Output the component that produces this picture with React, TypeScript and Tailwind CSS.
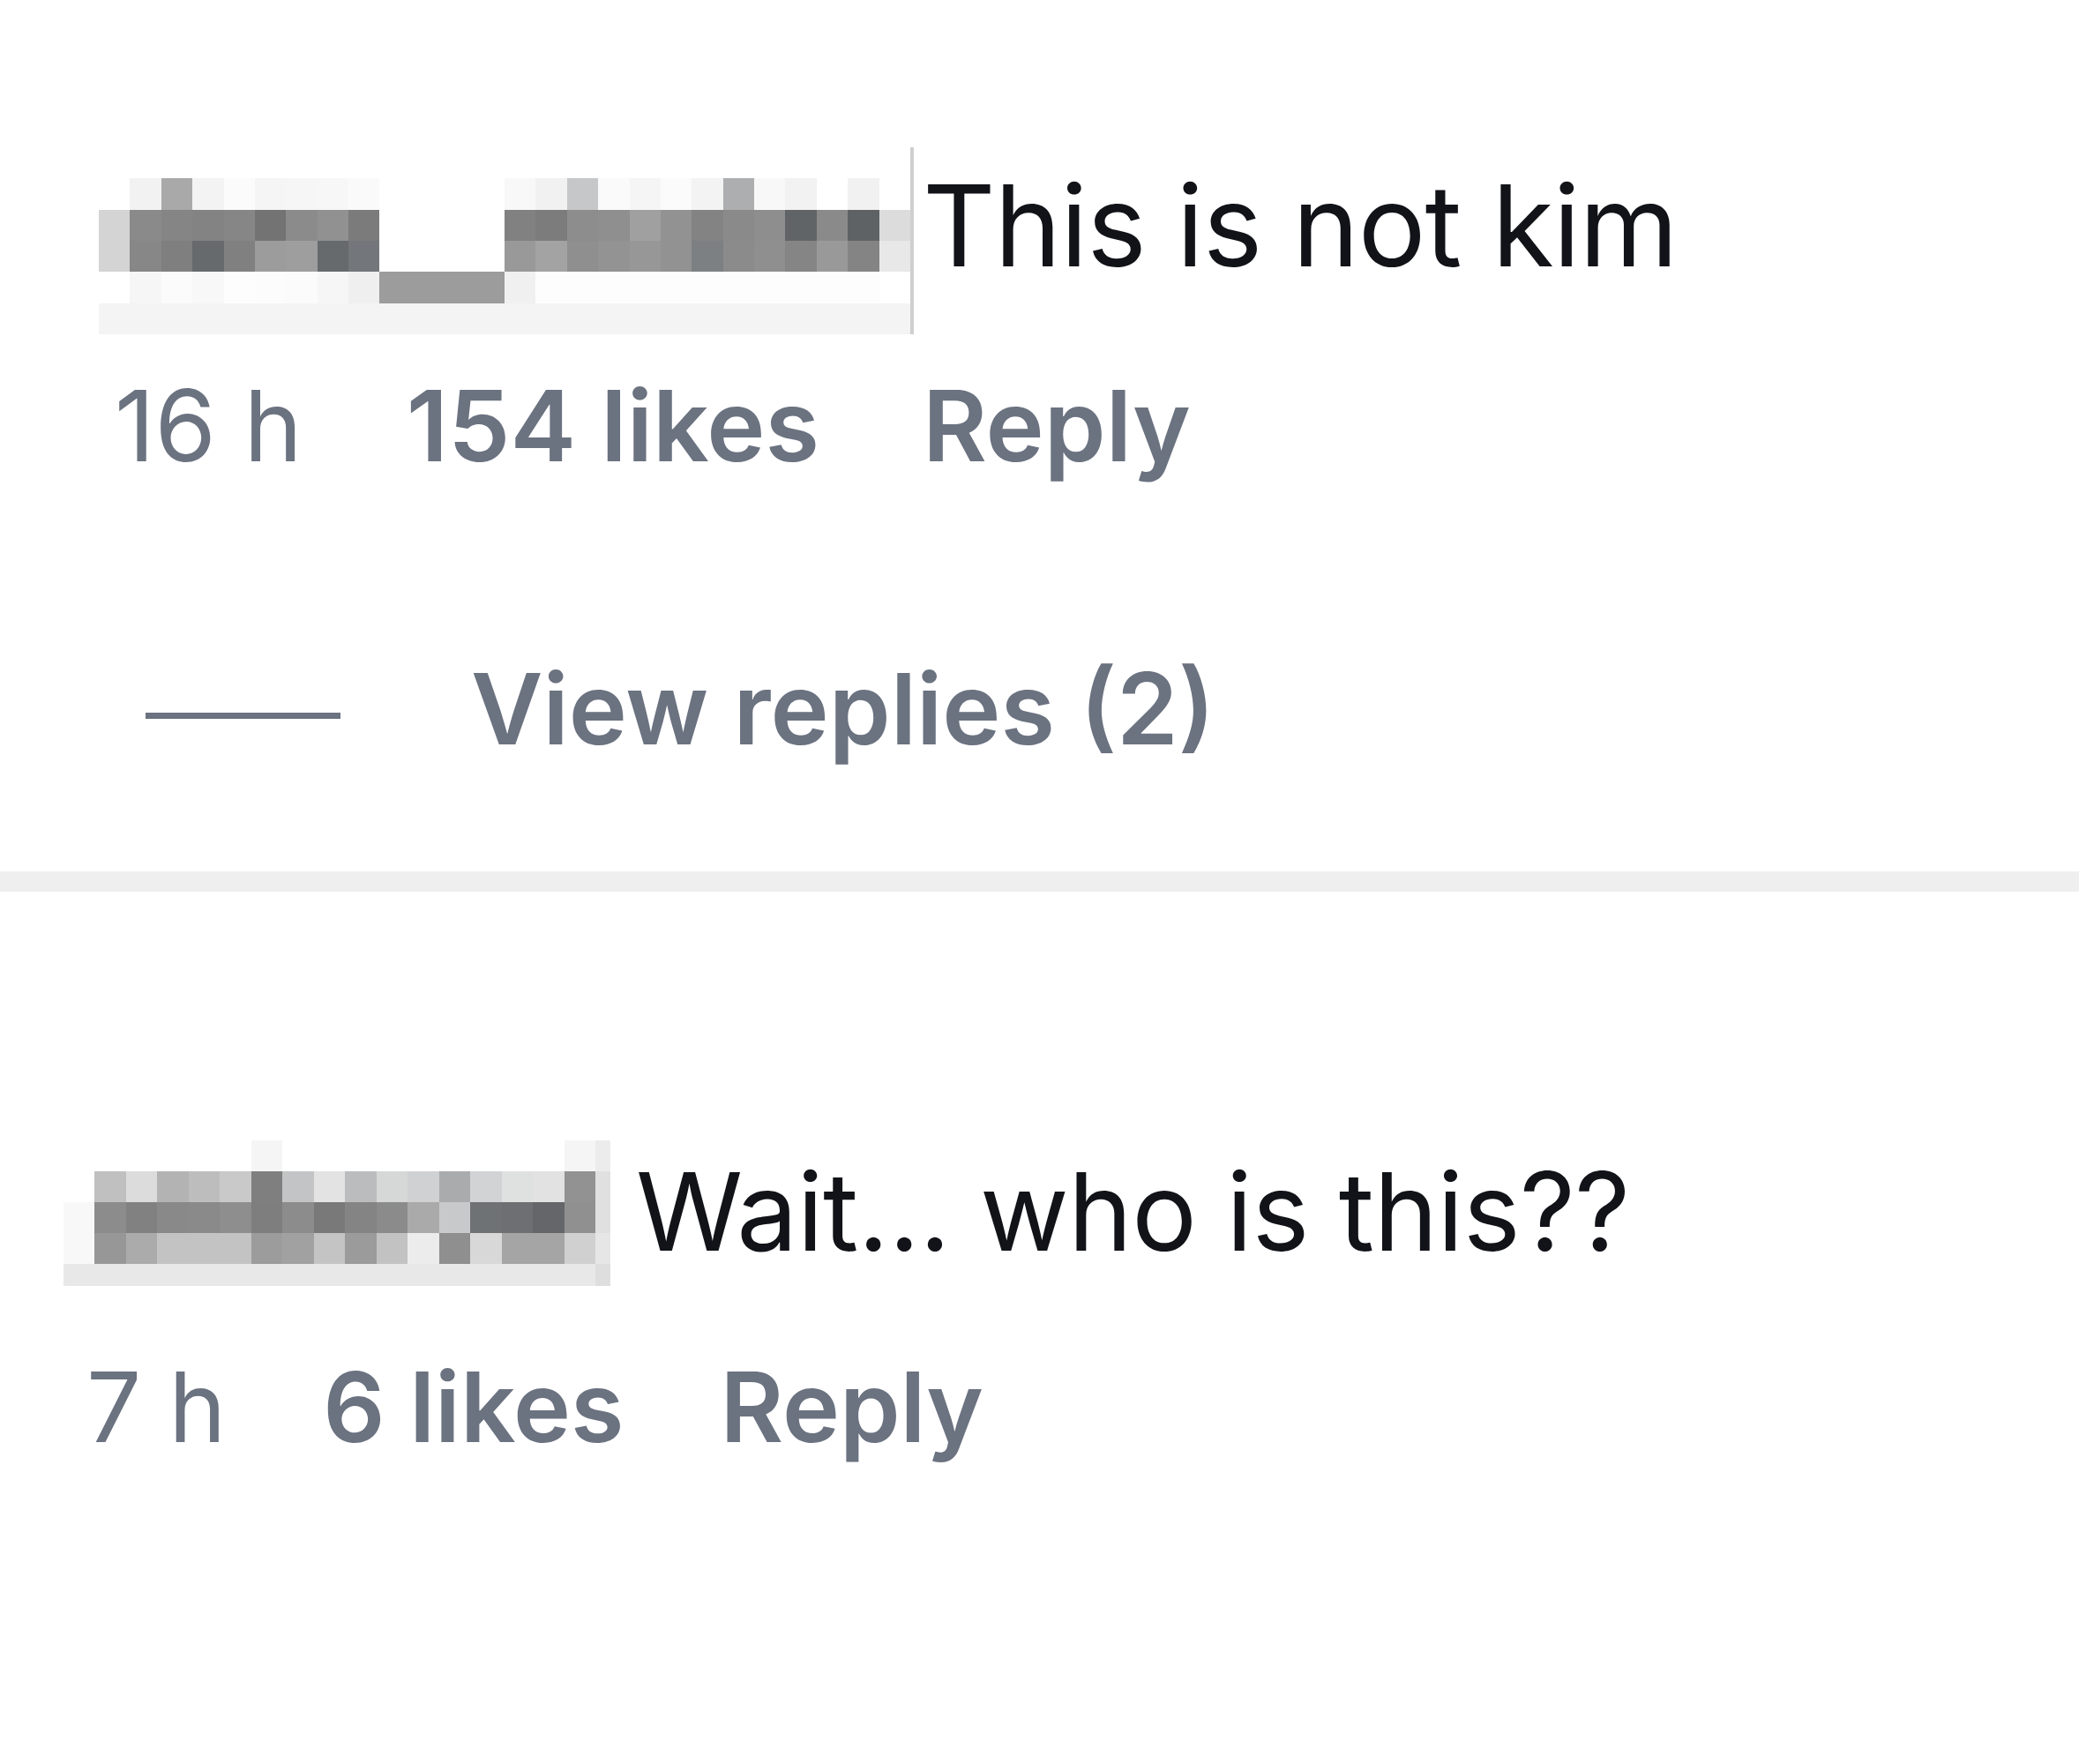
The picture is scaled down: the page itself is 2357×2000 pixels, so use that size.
const W = '#ffffff';

// pixelated usernames, row by row
const nameOne: string[][] = [
  Array(26).fill(W),
  [W, '#f2f2f2', '#a9a9a9', '#f3f3f3', '#fbfbfb', '#f5f5f5', '#f6f6f6', '#f7f7f7', '#fafafa', W, W, W, W, '#f7f8f7', '#f1f1f1', '#c6c7c8', '#fafafa', '#f5f5f5', '#fbfbfb', '#f3f3f3', '#adaeaf', '#f8f8f8', '#f2f2f2', W, '#f1f1f1', W],
  ['#d4d4d4', '#8a8a8a', '#858585', '#838383', '#868686', '#737373', '#8b8b8b', '#919191', '#7b7b7b', W, W, W, W, '#818181', '#7c7c7c', '#8d8d8d', '#8f8f8f', '#a0a0a0', '#929292', '#838383', '#8a8a8a', '#8e8e8e', '#616467', '#8a8a8a', '#5f6265', '#dcdcdc'],
  ['#d4d4d4', '#878787', '#7f7f7f', '#666a6c', '#808080', '#9c9c9c', '#9e9e9e', '#676a6c', '#73767a', W, W, W, W, '#999999', '#a3a3a3', '#8f8f8f', '#939393', '#979797', '#929292', '#7c8082', '#8b8b8b', '#8f8f8f', '#858585', '#999999', '#848484', '#e8e8e8'],
  [W, '#f6f6f6', '#fbfbfb', '#f7f8f7', '#fdfdfd', '#fcfcfc', '#fbfbfb', '#f6f6f6', '#eeefee', '#9c9c9c', '#9c9c9c', '#9c9c9c', '#9c9c9c', '#f0f0f0', ...Array(11).fill('#fdfdfd'), W],
  Array(26).fill('#f4f4f4'),
];

const nameTwo: string[][] = [
  [W, W, W, W, W, W, '#f4f5f4', W, W, W, W, W, W, W, W, W, '#f5f5f5', '#ececec'],
  [W, '#c0c0c0', '#dcdcdc', '#b3b3b3', '#bdbdbd', '#c9c9c9', '#7f7f7f', '#c3c4c5', '#e3e3e3', '#bbbcbd', '#d6d7d7', '#d0d1d2', '#aaabac', '#d2d3d4', '#dfe0e0', '#e2e2e2', '#929292', '#e0e0e0'],
  ['#f8f8f8', '#8c8c8c', '#818181', '#898989', '#8a8a8a', '#8e8e8e', '#7e7e7e', '#8c8c8c', '#797979', '#848484', '#8b8b8b', '#aaaaaa', '#c8c9ca', '#6e7275', '#6d6f72', '#64666a', '#909090', '#e0e0e0'],
  ['#f8f8f8', '#979797', '#ababab', '#c3c3c3', '#c3c3c3', '#c3c3c3', '#9c9c9c', '#a1a1a1', '#c4c4c4', '#9b9b9b', '#c2c2c2', '#ececec', '#8f8f8f', '#d8d8d8', '#a5a5a5', '#a5a5a5', '#cfd0cf', '#e6e6e6'],
  [...Array(17).fill('#e8e8e8'), '#dedede'],
];

function Cells({ rows }: { rows: string[][] }) {
  return (
    <>
      {rows.flatMap((row, r) =>
        row.map((c, i) => <div key={`${r}-${i}`} style={{ backgroundColor: c }} />)
      )}
    </>
  );
}

function Meta({ time, likes, gapA, gapB }: { time: string; likes: string; gapA: string; gapB: string }) {
  return (
    <div className="flex leading-none text-[#6b7280]">
      <span className={gapA}>{time}</span>
      <span className={`font-semibold ${gapB}`}>{likes}</span>
      <span className="font-semibold">Reply</span>
    </div>
  );
}

export default function App() {
  return (
    <div className="min-h-[2000px] w-full bg-white font-['Inter','Liberation_Sans',sans-serif]">
      {/* first comment */}
      <section className="pt-[167px]">
        <div className="flex items-start">
          <div className="ml-[112px] grid h-[212px] w-[920px] grid-cols-[repeat(26,1fr)] grid-rows-[repeat(6,1fr)]">
            <Cells rows={nameOne} />
          </div>
          <div className="h-[212px] w-[4px] bg-[#cfcfcf]" />
          <p className="ml-[10px] mt-[25px] text-[128px] leading-none tracking-[-0.008em] text-[#111318]">This is not kim</p>
        </div>

        <div className="ml-[130px] mt-[47px] text-[112px]">
          <Meta time="16 h" likes="154 likes" gapA="mr-[118px]" gapB="mr-[117px]" />
        </div>

        <button className="ml-[165px] mt-[209px] flex items-start text-[112px] leading-none font-semibold text-[#6b7280]">
          <span className="mt-[61px] h-[7px] w-[221px] bg-[#6b7280]" />
          <span className="ml-[148px]">View replies (2)</span>
        </button>
      </section>

      <div className="mt-[129px] h-[23px] w-full bg-[#efefef]" />

      {/* second comment */}
      <section className="pt-[282px]">
        <div className="flex items-start">
          <div className="ml-[72px] grid h-[165px] w-[620px] grid-cols-[35px_repeat(16,35.5px)_17px] grid-rows-[35px_35px_35px_35px_25px]">
            <Cells rows={nameTwo} />
          </div>
          <p className="ml-[29px] mt-[19px] text-[123px] leading-none tracking-[-0.005em] text-[#111318]">Wait... who is this??</p>
        </div>

        <div className="ml-[98px] mt-[82px] text-[110px]">
          <Meta time="7 h" likes="6 likes" gapA="mr-[110px]" gapB="mr-[109px]" />
        </div>
      </section>
    </div>
  );
}
